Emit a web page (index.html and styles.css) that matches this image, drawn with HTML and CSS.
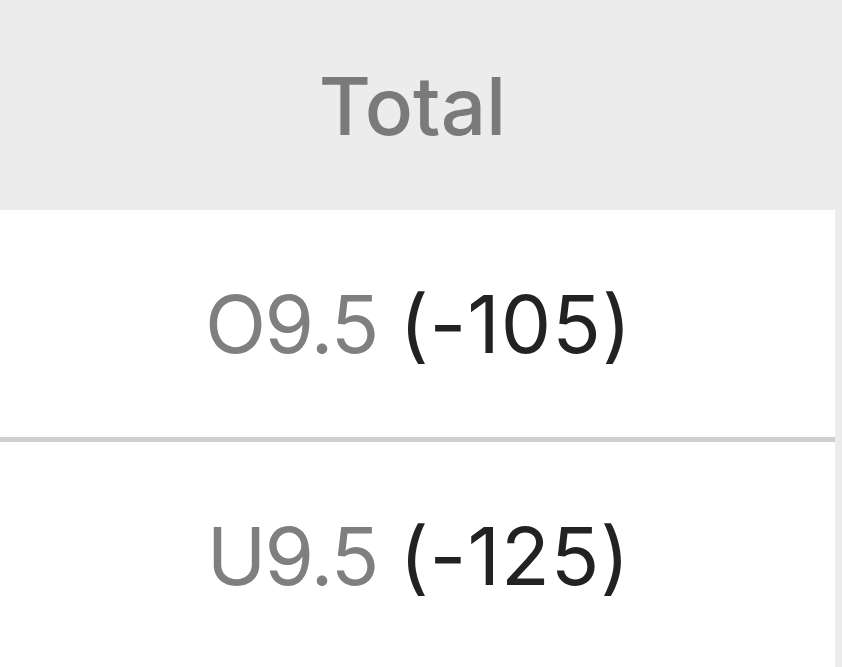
FILE: index.html
```html
<!DOCTYPE html>
<html>
<head>
<meta charset="utf-8">
<link rel="stylesheet" href="styles.css">
</head>
<body>
<div class="page">
  <div class="col">
    <div class="head">Total</div>
    <div class="row"><span class="line">O9.5</span><span class="odds">(-105)</span></div>
    <div class="row"><span class="line">U9.5</span><span class="odds">(-125)</span></div>
  </div>
</div>
</body>
</html>
```
FILE: styles.css
```css
html, body {
  margin: 0;
  padding: 0;
  background: #ececec;
  font-family: Inter, "Noto Sans", sans-serif;
}
.page {
  width: 842px;
  height: 667px;
  overflow: hidden;
}
.col {
  width: 835px;
  display: flex;
  flex-direction: column;
}
.head {
  height: 210px;
  background: #ececec;
  color: #7a7a7a;
  font-size: 80px;
  display: flex;
  align-items: center;
  justify-content: center;
  font-weight: 500;
  padding-right: 10px;
}
.row {
  height: 227px;
  background: #fff;
  display: flex;
  align-items: center;
  justify-content: center;
  font-size: 80px;
  gap: 0.27em;
  border-bottom: 5px solid #cfcfcf;
  padding-left: 2px;
}
.line {
  color: #7f7f7f;
  letter-spacing: -0.02em;
}
.odds {
  color: #222;
  letter-spacing: 0.012em;
}
```
